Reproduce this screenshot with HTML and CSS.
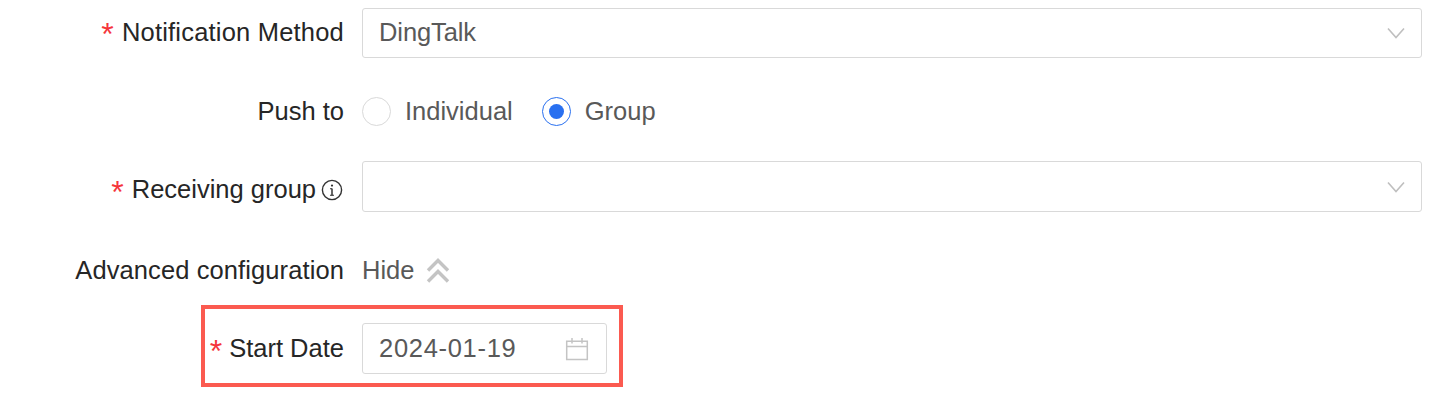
FILE: index.html
```html
<!DOCTYPE html>
<html lang="en">
<head>
    <meta charset="UTF-8">
    <title>Start Date</title>
    <link rel="stylesheet" href="styles.css">
</head>
<body>
    <form class="form">
        <div class="form-row row-method">
            <label class="form-label"><span class="required">*</span>Notification Method</label>
            <div class="select">
                <span class="select-value">DingTalk</span>
                <svg class="arrow" width="18" height="12" viewBox="0 0 18 12"><path d="M1 1.5 L9 10.5 L17 1.5" fill="none" stroke="#bfbfbf" stroke-width="1.6"/></svg>
            </div>
        </div>
        <div class="form-row row-push">
            <label class="form-label">Push to</label>
            <div class="radio-group">
                <span class="radio"></span>
                <span class="radio-text">Individual</span>
                <span class="radio checked"></span>
                <span class="radio-text">Group</span>
            </div>
        </div>
        <div class="form-row row-group">
            <label class="form-label"><span class="required">*</span>Receiving group<svg class="info" width="22" height="22" viewBox="0 0 22 22"><circle cx="11" cy="11" r="9.6" fill="none" stroke="#333" stroke-width="1.4"/><circle cx="11" cy="6.6" r="1.1" fill="#333"/><path d="M11 9.4 V16.4" stroke="#333" stroke-width="1.5"/><path d="M9 9.7 H11 M9 16.2 H13" stroke="#333" stroke-width="1.1"/></svg></label>
            <div class="select">
                <svg class="arrow" width="18" height="12" viewBox="0 0 18 12"><path d="M1 1.5 L9 10.5 L17 1.5" fill="none" stroke="#bfbfbf" stroke-width="1.6"/></svg>
            </div>
        </div>
        <div class="form-row row-advanced">
            <label class="form-label">Advanced configuration</label>
            <div class="toggle">
                <span>Hide</span>
                <svg width="24" height="26" viewBox="0 0 24 26"><path d="M2 12.5 L12 2.5 L22 12.5 M2 23.5 L12 13.5 L22 23.5" fill="none" stroke="#c4c4c4" stroke-width="3.4"/></svg>
            </div>
        </div>
        <div class="form-row row-date">
            <div class="highlight"></div>
            <label class="form-label"><span class="required">*</span>Start Date</label>
            <div class="date-input">
                <span class="date-value">2024-01-19</span>
                <svg width="24" height="24" viewBox="0 0 24 24"><path d="M1.7 4.2 H22.3 V22.6 H1.7 Z M1.7 9.6 H22.3 M7 1 V6.4 M17 1 V6.4" fill="none" stroke="#c4c4c4" stroke-width="1.5"/></svg>
            </div>
        </div>
    </form>
</body>
</html>
```

FILE: styles.css
```css
body {
    margin: 0;
    background-color: #fff;
    font-family: "Liberation Sans", Arial, sans-serif;
    font-size: 25.5px;
    color: #262626;
}
.form {
    padding-top: 8px;
    padding-bottom: 26px;
    width: 1422px;
}
.form-row {
    position: relative;
    display: flex;
    align-items: center;
}
.form-label {
    flex: 0 0 344px;
    display: flex;
    justify-content: flex-end;
    align-items: center;
    margin-right: 18px;
    white-space: nowrap;
}
.required {
    color: #f5353b;
    font-size: 32px;
    line-height: 1;
    margin-top: 4px;
    margin-right: 8px;
}
.info {
    margin-left: 5px;
    margin-right: 1px;
}
.select {
    flex: 1;
    height: 50px;
    box-sizing: border-box;
    border: 1px solid #d9d9d9;
    border-radius: 3px;
    display: flex;
    align-items: center;
    padding: 0 16px;
}
.select-value {
    color: #595959;
    padding-bottom: 2px;
    letter-spacing: -0.1px;
}
.arrow {
    margin-left: auto;
}
.row-method {
    height: 50px;
}
.row-method .form-label {
    letter-spacing: 0.2px;
    padding-bottom: 2px;
}
.row-push {
    height: 50px;
    margin-top: 28px;
}
.row-group {
    height: 51px;
    margin-top: 25px;
}
.row-group .form-label {
    padding-top: 6px;
}
.row-group .select {
    height: 51px;
}
.row-advanced {
    height: 50px;
    margin-top: 34px;
}
.row-advanced .form-label {
    letter-spacing: 0.1px;
    padding-bottom: 2px;
}
.row-date {
    height: 51px;
    margin-top: 27px;
}
.row-date .required {
    margin-right: 7px;
}
.radio-group {
    display: flex;
    align-items: center;
    color: #595959;
}
.radio {
    width: 29px;
    height: 29px;
    box-sizing: border-box;
    border: 1px solid #d9d9d9;
    border-radius: 50%;
    margin-right: 14px;
}
.radio-text {
    margin-right: 29px;
}
.radio.checked {
    border-color: #2970f0;
    display: flex;
    align-items: center;
    justify-content: center;
}
.radio.checked::after {
    content: "";
    width: 15px;
    height: 15px;
    border-radius: 50%;
    background-color: #2970f0;
}
.toggle {
    display: flex;
    align-items: center;
    gap: 12px;
    color: #595959;
}
.toggle span {
    padding-bottom: 2px;
}
.date-input {
    width: 245px;
    height: 51px;
    box-sizing: border-box;
    border: 1px solid #d9d9d9;
    border-radius: 3px;
    display: flex;
    align-items: center;
    justify-content: space-between;
    padding: 0 17px 0 16px;
    color: #595959;
}
.date-value {
    letter-spacing: 0.7px;
}
.highlight {
    position: absolute;
    left: 201px;
    top: -18px;
    width: 422px;
    height: 82px;
    box-sizing: border-box;
    border: 4px solid #fb5a50;
}
```
